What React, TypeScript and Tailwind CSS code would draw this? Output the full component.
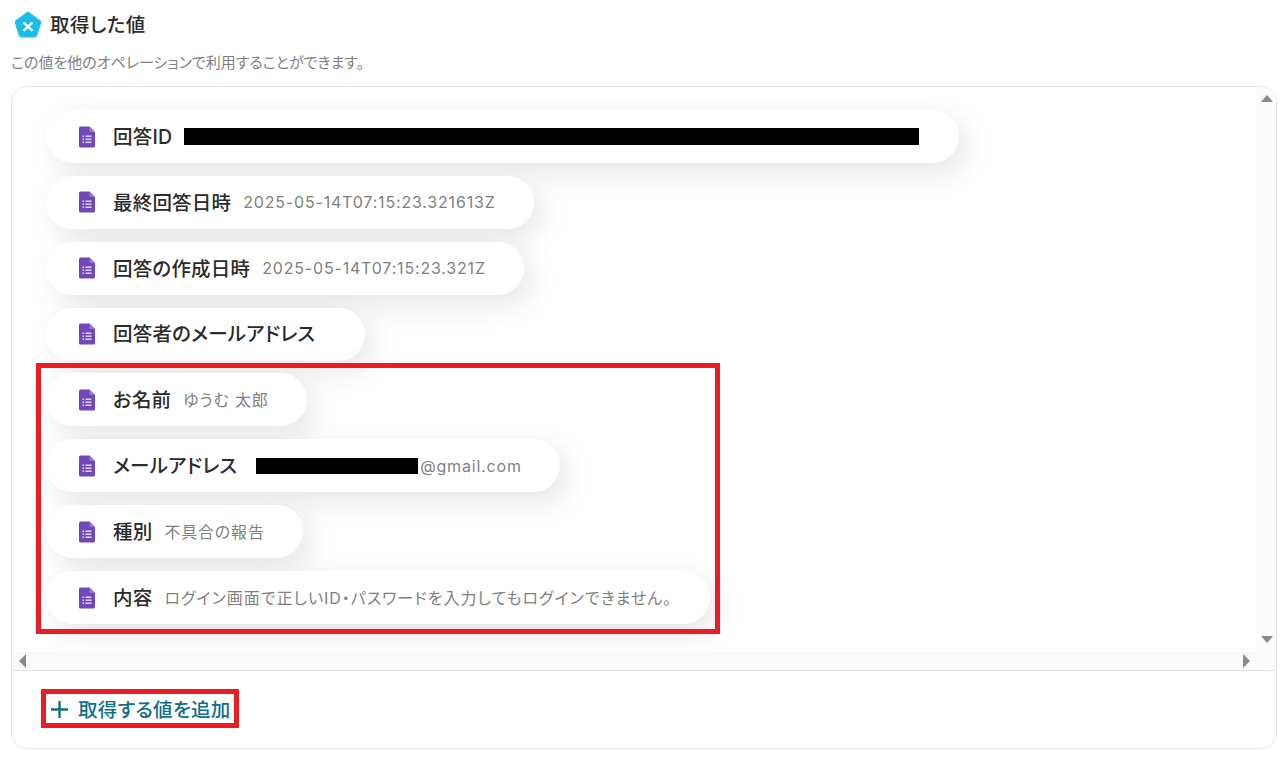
// 取得した値 パネル
const FONT = "font-['Inter','Noto_Sans_CJK_JP',sans-serif] [font-feature-settings:'palt']";

function FormIcon() {
  return (
    <svg width="18" height="22" viewBox="0 0 18 22" className="shrink-0">
      <path d="M2.5 0.5H11.5L17 6V20A1.5 1.5 0 0 1 15.5 21.5H2.5A1.5 1.5 0 0 1 1 20V2A1.5 1.5 0 0 1 2.5 0.5Z" fill="#7248b9" />
      <path d="M11.5 0.5L17 6H11.5Z" fill="#9a78d0" />
      <g fill="#e6dcf5">
        <rect x="4.5" y="9.5" width="1.6" height="1.4" />
        <rect x="7.5" y="9.5" width="6" height="1.4" />
        <rect x="4.5" y="12.5" width="1.6" height="1.4" />
        <rect x="7.5" y="12.5" width="6" height="1.4" />
        <rect x="4.5" y="15.5" width="1.6" height="1.4" />
        <rect x="7.5" y="15.5" width="6" height="1.4" />
      </g>
    </svg>
  );
}

function Pill({ label, children }: { label: string; children?: React.ReactNode }) {
  return (
    <div className="flex h-[53px] w-fit items-center rounded-full bg-white pl-[32px] pr-[38px] shadow-[8px_10px_30px_rgba(0,0,0,0.1)]">
      <FormIcon />
      <span className="ml-[17px] pt-[2px] text-[19.5px] font-medium tracking-[0.2px] whitespace-nowrap text-[#2b2b2b]">{label}</span>
      {children}
    </div>
  );
}

function Value({ children }: { children: React.ReactNode }) {
  return <span className="ml-3 text-[16px] tracking-[0.82px] whitespace-nowrap text-[#7f7f7f]">{children}</span>;
}

export default function App() {
  return (
    <div className={`relative h-[757px] w-[1286px] overflow-hidden bg-white px-[11px] ${FONT}`}>
      <div className="flex h-[50px] items-center gap-[8px] pl-[3px]">
        <svg width="28" height="27" viewBox="1 1 26 25">
          <path d="M12.2 1.6a3 3 0 0 1 3.6 0l9.2 6.7a3 3 0 0 1 1.1 3.4l-3.5 10.8a3 3 0 0 1-2.9 2.1H8.3a3 3 0 0 1-2.9-2.1L1.9 11.7A3 3 0 0 1 3 8.3Z" fill="#1bbde8" />
          <path d="M10.5 11.2L17.5 17.8M17.5 11.2L10.5 17.8" stroke="#fff" strokeWidth="2.2" strokeLinecap="round" />
        </svg>
        <h1 className="pt-[2px] text-[19.5px] font-medium tracking-[0.4px] text-[#2b2b2b]">取得した値</h1>
      </div>
      <p className="mt-[3px] text-[15px] leading-[20px] text-[#7f7f7f]">この値を他のオペレーションで利用することができます。</p>

      <div className="mt-[13px] h-[663px] w-[1266px] overflow-hidden rounded-[16px] border border-[#e6e6e6]">
        <div className="flex h-[583px]">
          <div className="flex flex-1 flex-col">
            <div className="flex h-[565px] flex-col gap-[12.86px] pt-[23px] pl-[34px]">
              <Pill label="回答ID">
                <span className="mr-[2px] ml-[12px] h-[17px] w-[735px] bg-black" />
              </Pill>
              <Pill label="最終回答日時"><Value>2025-05-14T07:15:23.321613Z</Value></Pill>
              <Pill label="回答の作成日時"><Value>2025-05-14T07:15:23.321Z</Value></Pill>
              <Pill label="回答者のメールアドレス"><span className="ml-[12px]" /></Pill>
              <Pill label="お名前"><Value>ゆうむ 太郎</Value></Pill>
              <Pill label="メールアドレス">
                <span className="ml-[19px] h-[16px] w-[162px] bg-black" />
                <span className="ml-[2px] text-[16px] tracking-[0.82px] text-[#7f7f7f]">@gmail.com</span>
              </Pill>
              <Pill label="種別"><Value>不具合の報告</Value></Pill>
              <Pill label="内容">
                <span className="ml-3 text-[16px] tracking-[0.98px] whitespace-nowrap text-[#7f7f7f]">ログイン画面で正しいID・パスワードを入力してもログインできません。</span>
              </Pill>
            </div>
            <div className="flex h-[18px] items-center justify-between bg-[#fafafa] pr-[7px] pl-[7px]">
              <span className="h-0 w-0 border-y-[7px] border-r-[7px] border-y-transparent border-r-[#8a8a8a]" />
              <span className="h-0 w-0 border-y-[7px] border-l-[7px] border-y-transparent border-l-[#8a8a8a]" />
            </div>
          </div>
          <div className="flex w-[19px] flex-col items-center justify-between bg-[#fcfcfc] pt-[8px] pb-[27px]">
            <span className="h-0 w-0 border-x-[6.5px] border-b-[7px] border-x-transparent border-b-[#8a8a8a]" />
            <span className="h-0 w-0 border-x-[6.5px] border-t-[7px] border-x-transparent border-t-[#8a8a8a]" />
          </div>
        </div>
        <div className="flex h-[78px] items-center border-t border-[#e6e6e6] pl-[38px]">
          <div className="flex items-center gap-[9px] text-[19.5px] font-medium tracking-[0.25px] text-[#126f86]">
            <svg width="19" height="19" viewBox="0 0 19 19">
              <path d="M9.5 1V18M1 9.5H18" stroke="#126f86" strokeWidth="2.4" />
            </svg>
            <span className="pt-[2px]">取得する値を追加</span>
          </div>
        </div>
      </div>

      {/* 赤枠 */}
      <div className="absolute top-[363px] left-[36px] h-[271px] w-[684px] border-[5px] border-[#ed1c24]" />
      <div className="absolute top-[689px] left-[41px] h-[39px] w-[198px] border-[5px] border-[#ed1c24]" />
    </div>
  );
}
